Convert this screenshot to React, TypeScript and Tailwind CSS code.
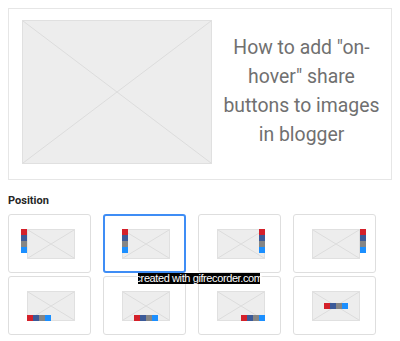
import React from "react";

const C = ["bg-[#d4202a]", "bg-[#3b5a99]", "bg-[#858585]", "bg-[#1b8fff]"];

function Strip({ vertical, className }: { vertical: boolean; className: string }) {
  return (
    <div className={`absolute flex ${vertical ? "flex-col" : "flex-row"} ${className}`}>
      {C.map((c) => (
        <div key={c} className={`w-[6px] h-[6px] ${c}`} />
      ))}
    </div>
  );
}

function Placeholder({ className }: { className: string }) {
  return (
    <div className={`relative bg-[#ededed] border border-[#e0e0e0] ${className}`}>
      <svg className="absolute inset-0 w-full h-full" viewBox="0 0 100 100" preserveAspectRatio="none">
        <line x1="0" y1="0" x2="100" y2="100" stroke="#dcdcdc" strokeWidth="1" vectorEffect="non-scaling-stroke" />
        <line x1="100" y1="0" x2="0" y2="100" stroke="#dcdcdc" strokeWidth="1" vectorEffect="non-scaling-stroke" />
      </svg>
    </div>
  );
}

type T = { strip: string; vertical: boolean };

const tiles: T[] = [
  { strip: "left-[-6px] top-0", vertical: true },
  { strip: "left-0 top-0", vertical: true },
  { strip: "right-0 top-0", vertical: true },
  { strip: "right-[-6px] top-0", vertical: true },
  { strip: "left-0 bottom-0", vertical: false },
  { strip: "left-[12px] bottom-0", vertical: false },
  { strip: "right-0 bottom-0", vertical: false },
  { strip: "left-[12px] top-[12px]", vertical: false },
];

export default function App() {
  return (
    <div className="relative w-[400px] h-[341px] overflow-hidden bg-white px-2 pt-2 font-['Roboto',sans-serif]">
      <div className="flex h-[172px] border border-[#e6e6e6]">
        <div className="pl-[13px] pt-[11px]">
          <Placeholder className="w-[190px] h-[144px]" />
        </div>
        <div className="flex flex-1 items-center justify-center pb-[7px]">
          <p className="w-[166px] text-center text-[19.4px] leading-[29px] text-[#707070]">
            How to add "on-hover" share buttons to images in blogger
          </p>
        </div>
      </div>
      <div className="mt-[14px] text-[11px] leading-[14px] font-bold text-[#262626]">Position</div>
      <div className="mt-[6px] grid w-[368px] grid-cols-4 gap-x-[12px] gap-y-[3px]">
        {tiles.map((t, i) => (
          <div
            key={i}
            className={`flex h-[59px] items-center justify-center rounded-[3px] pl-[3px] ${
              i === 1 ? "border-2 border-[#3f8df5]" : "border border-[#dedede]"
            }`}
          >
            <div className="relative">
              <Placeholder className="w-[48px] h-[30px]" />
              <Strip vertical={t.vertical} className={t.strip} />
            </div>
          </div>
        ))}
      </div>
      <div className="absolute left-[138px] top-[273px] h-[11px] w-[122px] bg-black flex items-center justify-center">
        <span className="text-[11px] leading-[11px] tracking-[-0.4px] text-white font-['Liberation_Sans',Arial,sans-serif] whitespace-nowrap">
          created with gifrecorder.com
        </span>
      </div>
    </div>
  );
}
